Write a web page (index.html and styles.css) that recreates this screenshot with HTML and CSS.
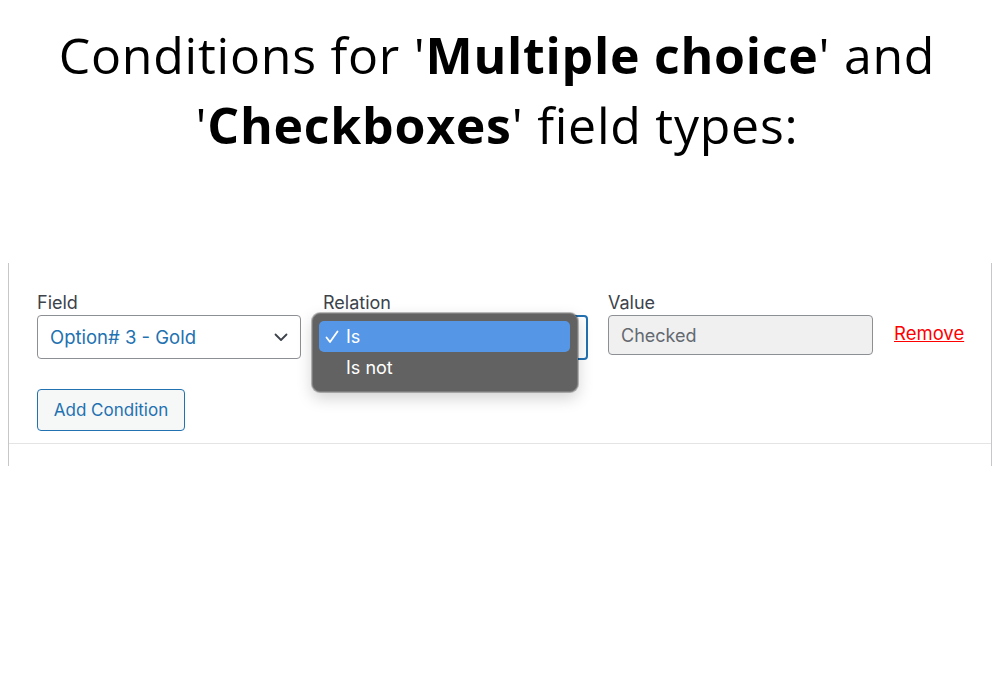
FILE: index.html
```html
<!DOCTYPE html>
<html>
<head>
<meta charset="utf-8">
<link rel="stylesheet" href="styles.css">
</head>
<body>
<header class="title">
  <h1>Conditions for '<b>Multiple choice</b>' and<br>'<b>Checkboxes</b>' field types:</h1>
</header>
<section class="panel">
  <div class="row">
    <div class="col first">
      <label class="lbl">Field</label>
      <div class="select">
        <span>Option# 3 - Gold</span>
        <svg class="chev" width="14" height="9" viewBox="0 0 14 9"><path d="M1.5 1.5 L7 7 L12.5 1.5" fill="none" stroke="#3c434a" stroke-width="1.8" stroke-linecap="round" stroke-linejoin="round"/></svg>
      </div>
    </div>
    <div class="col rel">
      <label class="lbl">Relation</label>
      <div class="select focus"></div>
      <div class="popup">
        <div class="opt active"><svg class="check" width="14" height="14" viewBox="0 0 14 14"><path d="M1.5 7.5 L5 12 L12.5 1.5" fill="none" stroke="#fff" stroke-width="1.8" stroke-linecap="round" stroke-linejoin="round"/></svg>Is</div>
        <div class="opt">Is not</div>
      </div>
    </div>
    <div class="col">
      <label class="lbl">Value</label>
      <div class="input">Checked</div>
    </div>
    <a class="remove" href="#">Remove</a>
  </div>
  <button class="add">Add Condition</button>
  <div class="sep"></div>
</section>
</body>
</html>
```
FILE: styles.css
```css
html, body {
  margin: 0;
  background: #fff;
}
body {
  width: 1000px;
  height: 700px;
  overflow: hidden;
  font-family: Inter, "Liberation Sans", sans-serif;
}
.title {
  padding-top: 20px;
  height: 263px;
  box-sizing: border-box;
}
.title h1 {
  margin: 0;
  text-align: center;
  font-family: "Open Sans", "Liberation Sans", sans-serif;
  font-weight: 400;
  font-size: 50px;
  line-height: 70px;
  letter-spacing: 0.75px;
  color: #000;
  padding-right: 6px;
}
.title b {
  font-weight: 700;
}
.panel {
  margin: 0 8px;
  height: 203px;
  box-sizing: border-box;
  border-left: 1px solid #c6c7c9;
  border-right: 1px solid #c6c7c9;
  padding: 28px 0 0 28px;
  position: relative;
}
.row {
  display: flex;
  align-items: flex-start;
}
.col {
  display: flex;
  flex-direction: column;
  width: 265px;
  margin-right: 20px;
}
.col.first {
  width: 264px;
  margin-right: 22px;
}
.col.rel {
  position: relative;
}
.lbl {
  font-size: 18px;
  line-height: 24px;
  color: #3c434a;
  height: 24px;
}
.select {
  box-sizing: border-box;
  height: 44px;
  border: 1px solid #8c8f94;
  border-radius: 4px;
  display: flex;
  align-items: center;
  justify-content: space-between;
  padding: 0 12px 0 12px;
  font-size: 18.5px;
  color: #2271b1;
}
.chev {
  margin-top: 1px;
}
.select.focus {
  border: 2px solid #2271b1;
  height: 45px;
}
.popup {
  position: absolute;
  left: -11px;
  top: 22px;
  width: 266px;
  height: 79px;
  box-sizing: border-box;
  background: #626262;
  border: 1px solid #7d7d7d;
  border-radius: 8px;
  box-shadow: 0 0 0 1px rgba(0,0,0,0.25), 0 6px 16px rgba(0,0,0,0.18);
  padding: 7px 7px 0 6px;
}
.opt {
  height: 31px;
  display: flex;
  align-items: center;
  padding-left: 27px;
  font-size: 18px;
  color: #fff;
  border-radius: 5px;
  position: relative;
}
.opt.active {
  background: #5597e6;
}
.check {
  position: absolute;
  left: 6px;
  top: 9px;
}
.input {
  box-sizing: border-box;
  height: 40px;
  border: 1px solid #8c8f94;
  border-radius: 4px;
  background: #f0f0f1;
  display: flex;
  align-items: center;
  padding-left: 12px;
  font-size: 18px;
  color: #646970;
}
.remove {
  margin-top: 31px;
  margin-left: 1px;
  font-size: 18.5px;
  color: #ff0000;
  text-decoration: underline;
  line-height: 22px;
}
.add {
  margin-top: 29px;
  height: 42px;
  width: 148px;
  box-sizing: border-box;
  border: 1px solid #2271b1;
  border-radius: 4px;
  background: #f6f7f7;
  color: #2271b1;
  font-family: Inter, "Liberation Sans", sans-serif;
  font-size: 17px;
  padding: 0;
  display: block;
}
.sep {
  position: absolute;
  left: 0;
  right: 0;
  top: 180px;
  border-top: 1px solid #e4e4e4;
}
```
